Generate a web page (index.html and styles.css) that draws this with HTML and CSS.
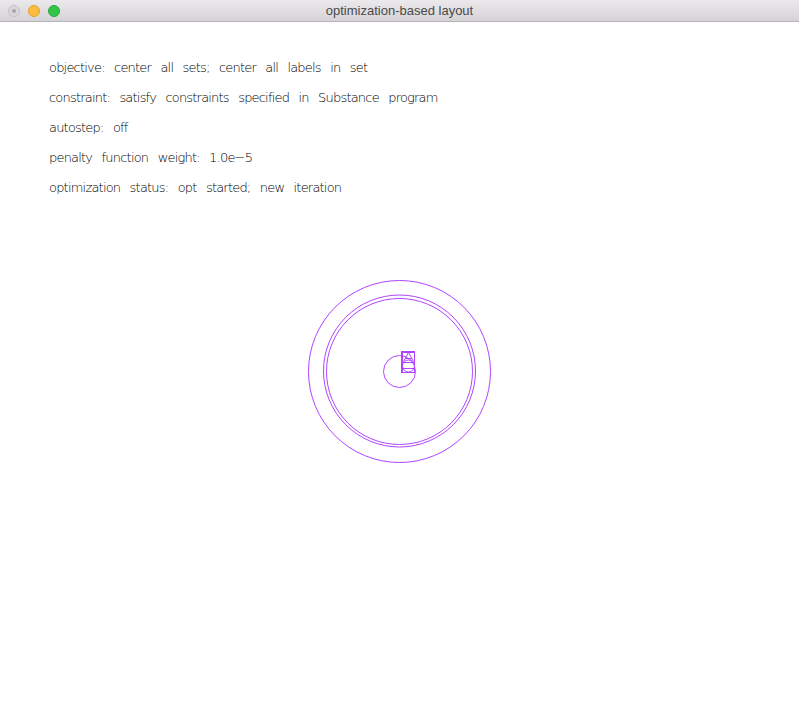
FILE: index.html
```html
<!DOCTYPE html>
<html>
<head>
<meta charset="utf-8">
<title>optimization-based layout</title>
<link rel="stylesheet" href="styles.css">
</head>
<body>
<div class="window">
  <div class="titlebar">
    <div class="lights">
      <span class="light close"><span class="dot"></span></span>
      <span class="light min"></span>
      <span class="light max"></span>
    </div>
    <div class="title">optimization-based layout</div>
  </div>
  <div class="content">
    <div class="info">
      <div class="line">objective: center all sets; center all labels in set</div>
      <div class="line">constraint: satisfy constraints specified in Substance program</div>
      <div class="line">autostep: off</div>
      <div class="line">penalty function weight: 1.0e&minus;5</div>
      <div class="line">optimization status: opt started; new iteration</div>
    </div>
    <svg class="canvas" width="799" height="700" viewBox="0 22 799 700">
      <g fill="none" stroke="#b144ff" stroke-width="1">
        <circle cx="399.5" cy="371.5" r="91"/>
        <circle cx="399.5" cy="371" r="76"/>
        <circle cx="399.5" cy="371.5" r="73"/>
        <circle cx="399.5" cy="371.5" r="16"/>
        <rect x="401.5" y="351.5" width="13" height="21"/>
        <rect x="402.5" y="352.5" width="12" height="20"/>
        <ellipse cx="408.5" cy="366" rx="6" ry="6"/>
        <line x1="401.5" y1="362.5" x2="414.5" y2="362.5"/>
        <line x1="401.5" y1="368.5" x2="414.5" y2="368.5"/>
        <path d="M403.5 361.5 L408.5 352.5 L413.5 361.5 M405 358.5 L412 358.5"/>
      </g>
    </svg>
  </div>
</div>
</body>
</html>
```
FILE: styles.css
```css
html, body {
  margin: 0;
  padding: 0;
  background: #ffffff;
}
.window {
  width: 799px;
  height: 722px;
  position: relative;
  overflow: hidden;
}
.titlebar {
  height: 22px;
  box-sizing: border-box;
  background: linear-gradient(#ebe9eb, #d5d3d5);
  border-bottom: 1px solid #b4b2b4;
  display: flex;
  align-items: center;
  position: relative;
}
.lights {
  display: flex;
  gap: 8px;
  padding-left: 8px;
  align-items: center;
}
.light {
  width: 12px;
  height: 12px;
  border-radius: 50%;
  box-sizing: border-box;
  display: flex;
  align-items: center;
  justify-content: center;
}
.light.close {
  background: #d9d7d9;
  border: 1px solid #c4c2c4;
}
.light.close .dot {
  width: 4px;
  height: 4px;
  border-radius: 50%;
  background: #a8a6a8;
}
.light.min {
  background: #fdbc40;
  border: 1px solid #e1a12e;
}
.light.max {
  background: #33c748;
  border: 1px solid #27a839;
}
.title {
  position: absolute;
  left: 0;
  right: 0;
  top: 0;
  height: 21px;
  line-height: 22px;
  text-align: center;
  font-family: "Liberation Sans", Arial, sans-serif;
  font-size: 13px;
  color: #4a4a4a;
}
.content {
  position: relative;
  height: 700px;
}
.info {
  padding: 31px 0 0 49px;
  position: relative;
  z-index: 1;
}
.line {
  font-family: "DejaVu Sans ExtraLight", "DejaVu Sans", sans-serif;
  font-weight: 200;
  font-size: 13px;
  line-height: 30px;
  height: 30px;
  color: #000;
  word-spacing: 6px;
  letter-spacing: -0.8px;
}
.canvas {
  position: absolute;
  left: 0;
  top: 0;
}
```
